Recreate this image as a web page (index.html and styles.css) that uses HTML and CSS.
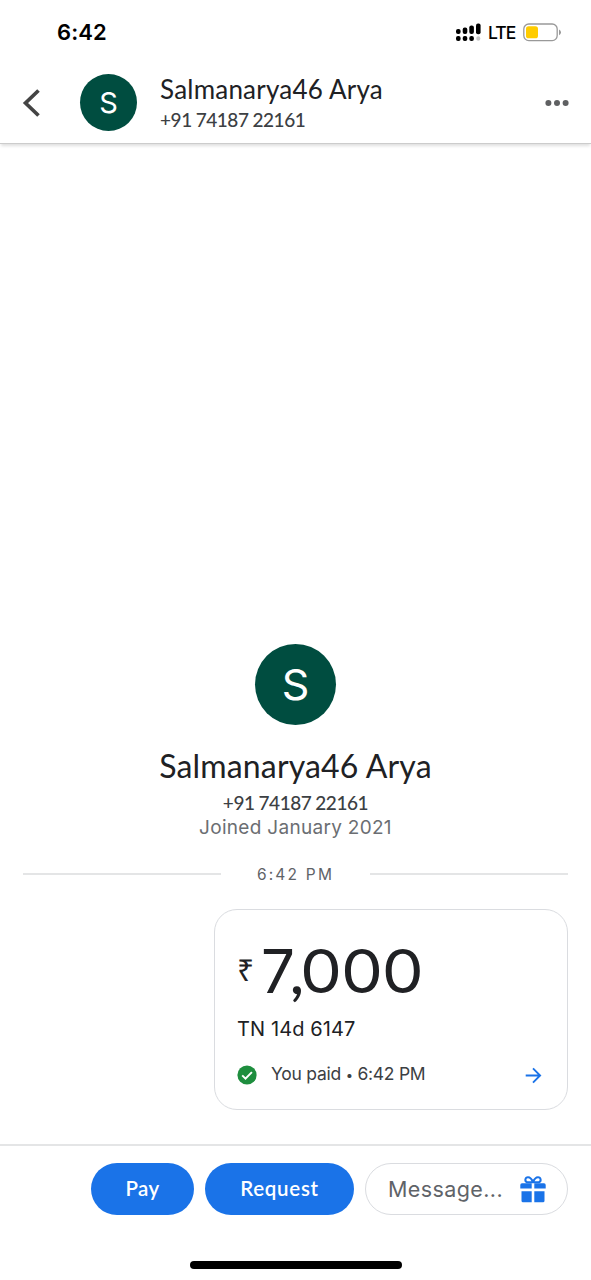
FILE: index.html
```html
<!DOCTYPE html>
<html lang="en">
<head>
<meta charset="utf-8">
<title>Salmanarya46 Arya</title>
<link rel="stylesheet" href="styles.css">
</head>
<body>
<div class="screen">
  <div class="status">
    <span class="clock">6:42</span>
    <span class="status-right">
      <svg class="signal" width="26" height="19" viewBox="0 0 26 19">
        <g fill="#000"><rect x="0" y="6" width="4.6" height="5" rx="2"/><rect x="6.7" y="4.6" width="4.6" height="6.4" rx="2"/><rect x="13.3" y="2.4" width="4.6" height="8.6" rx="2"/><rect x="20" y=".5" width="4.6" height="10.8" rx="2"/><rect x="0" y="13" width="4.6" height="5" rx="2"/><rect x="6.7" y="13" width="4.6" height="5" rx="2"/><rect x="13.3" y="13" width="4.6" height="5" rx="2"/></g>
        <rect x="20.3" y="13.3" width="4" height="4.4" rx="2" fill="#c8c8c8"/>
      </svg>
      <span class="lte">LTE</span>
      <svg class="battery" width="39" height="19" viewBox="0 0 39 19">
        <rect x=".8" y="1" width="33.4" height="16.6" rx="5" fill="#fff" stroke="#999" stroke-width="1.3"/>
        <rect x="3" y="3.3" width="12" height="12" rx="2.6" fill="#fc0"/>
        <path d="M36 6.4q2 .8 2 2.9t-2 2.9z" fill="#999"/>
      </svg>
    </span>
  </div>
  <header class="header">
    <svg class="back" width="18" height="30" viewBox="0 0 18 30"><path d="M16.5 2.5 3.5 15l13 12.5" fill="none" stroke="#444" stroke-width="3.7"/></svg>
    <div class="avatar">S</div>
    <div class="contact">
      <div class="contact-name">Salmanarya46 Arya</div>
      <div class="phone">+91 74187 22161</div>
    </div>
    <svg class="more" width="24" height="8" viewBox="0 0 24 8" fill="#5f6062"><circle cx="3.4" cy="4" r="3"/><circle cx="12" cy="4" r="3"/><circle cx="20.6" cy="4" r="3"/></svg>
  </header>
  <main class="chat">
    <div class="avatar avatar-large">S</div>
    <div class="hero-name">Salmanarya46 Arya</div>
    <div class="phone hero-phone">+91 74187 22161</div>
    <div class="joined">Joined January 2021</div>
    <div class="divider"><span class="divider-text">6:42 PM</span></div>
    <section class="card">
      <div class="amount"><span class="rupee">₹</span><span class="value"><span class="thousands">7</span><span class="comma">,</span><span class="zeros">000</span></span></div>
      <div class="note">TN 14d 6147</div>
      <div class="paid">
        <svg width="20" height="20" viewBox="0 0 20 20"><circle cx="10" cy="10" r="9.6" fill="#1e8e3e"/><path d="m5.2 10.4 3.3 3.2 6.4-6.5" fill="none" stroke="#fff" stroke-width="2"/></svg>
        <span class="paid-text">You paid <span class="dot">•</span> 6:42 PM</span>
        <svg class="arrow" width="17" height="17" viewBox="0 0 17 17"><path d="M.7 8.5h14M8 1.4l7.1 7.1L8 15.6" fill="none" stroke="#1a73e8" stroke-width="1.9"/></svg>
      </div>
    </section>
  </main>
  <footer class="footer">
    <div class="button pay"><span class="pay-text">Pay</span></div>
    <div class="button request"><span class="request-text">Request</span></div>
    <div class="message"><span class="message-text">Message...</span>
      <svg class="gift" width="26" height="27" viewBox="0 0 26 27">
        <path d="M2 7.2h9.7v5.4H.3V8.9Q.3 7.2 2 7.2zm12.3 0H24q1.7 0 1.7 1.7v3.7H14.3zM1.5 15.2h10.2v11H3q-1.5 0-1.5-1.5zm12.8 0h10.2v9.5q0 1.5-1.5 1.5h-8.7z" fill="#1a73e8"/>
        <path d="M13 6.2C11.5 2.5 9.8 1.3 8 1.3 5 1.3 4.4 5.2 7 6.2zm0 0c1.5-3.7 3.2-4.9 5-4.9 3 0 3.6 3.9 1 4.9z" fill="none" stroke="#1a73e8" stroke-width="2"/>
      </svg>
    </div>
  </footer>
  <div class="home"></div>
</div>
</body>
</html>
```
FILE: styles.css
```css
* { box-sizing: border-box; }
body { margin: 0; background: #fff; font-family: Lato, "Noto Sans", sans-serif; color: #202124; }
.screen { width: 591px; height: 1280px; display: flex; flex-direction: column; white-space: nowrap; overflow: hidden; }
svg { display: block; flex: none; }
.status { height: 62px; padding: 2px 29px 0 57px; display: flex; align-items: center; justify-content: space-between; font-family: Inter, sans-serif; color: #000; }
.clock { font-size: 22px; font-weight: 600; letter-spacing: .1px; }
.status-right { display: flex; align-items: center; }
.lte { font-size: 17.5px; font-weight: 500; margin-left: 6px; letter-spacing: -.9px; width: 35px; }
.header { height: 82px; display: flex; align-items: center; padding: 0 22px; border-bottom: 1px solid #ccc; box-shadow: 0 3px 3px -1px rgba(0,0,0,.13); }
.avatar { width: 57px; height: 57px; border-radius: 50%; background: #004d40; color: #fff; display: flex; align-items: center; justify-content: center; font: 400 29px/1 Inter, sans-serif; margin-left: 40px; }
.contact { margin-left: 23px; flex: 1; }
.contact-name { font-size: 26px; line-height: 30px; padding-bottom: 4px; letter-spacing: .22px; }
.phone { font-size: 19px; line-height: 24px; font-weight: 500; color: #3c4043; letter-spacing: -.45px; word-spacing: -.4px; }
.chat { flex: 1; padding: 500px 23px 0; display: flex; flex-direction: column; align-items: center; }
.avatar-large { width: 81px; height: 81px; font-size: 43px; margin: 0; flex: none; }
.hero-name { font-size: 32px; line-height: 40px; margin-top: 21px; letter-spacing: .15px; }
.hero-phone { margin-top: 5px; }
.joined { font: 400 19px/24px Inter, sans-serif; color: #6b6e72; letter-spacing: .3px; margin-top: 1px; }
.divider { width: 100%; display: flex; align-items: center; margin-top: 22px; font: 400 15.5px/24px Inter, sans-serif; color: #5f6368; }
.divider::before, .divider::after { content: ""; height: 2px; flex: 1; background: #e4e5e6; }
.divider-text { width: 149px; text-align: center; letter-spacing: 2.2px; padding-top: 1px; line-height: 23px; }
.card { align-self: flex-end; width: 354px; height: 201px; margin-top: 23px; border: 1.5px solid #dadce0; border-radius: 23px; padding: 26px 25px 0 22px; }
.amount { display: flex; height: 76px; }
.rupee { font: 400 30px/68px "Noto Sans", sans-serif; width: 24px; }
.value { font: 400 60px/71px Inter, sans-serif; display: flex; }
.thousands { letter-spacing: -5px; }
.comma { font-family: Lato, sans-serif; font-weight: 600; letter-spacing: -4px; }
.zeros { transform: scaleX(1.11); transform-origin: left; letter-spacing: -1px; }
.note { font: 400 20px/28px Inter, sans-serif; margin-top: 3px; letter-spacing: .1px; }
.paid { display: flex; align-items: center; margin-top: 19px; height: 26px; color: #3c4043; font: 400 17.5px/24px Inter, sans-serif; }
.paid-text { margin-left: 14px; flex: 1; letter-spacing: -.25px; padding-bottom: 1px; }
.dot { font-size: 13px; }
.footer { height: 99px; border-top: 2px solid #e4e5e6; padding: 17px 23px 0 91px; display: flex; gap: 11px; }
.button, .message { height: 52px; border-radius: 26px; display: flex; align-items: center; justify-content: center; }
.button { background: #1a73e8; color: #fff; font-size: 20.5px; font-weight: 600; letter-spacing: .3px; padding-bottom: 2px; }
.pay { width: 103px; }
.request { width: 149px; letter-spacing: .7px; }
.message { flex: 1; border: 1.5px solid #dadce0; justify-content: space-between; padding: 0 21px 0 22px; color: #5f6368; font: 400 21.5px/28px Inter, sans-serif; letter-spacing: .4px; }
.home { width: 212px; height: 8px; border-radius: 4px; background: #000; margin: 18px auto 11px; flex: none; }
```
